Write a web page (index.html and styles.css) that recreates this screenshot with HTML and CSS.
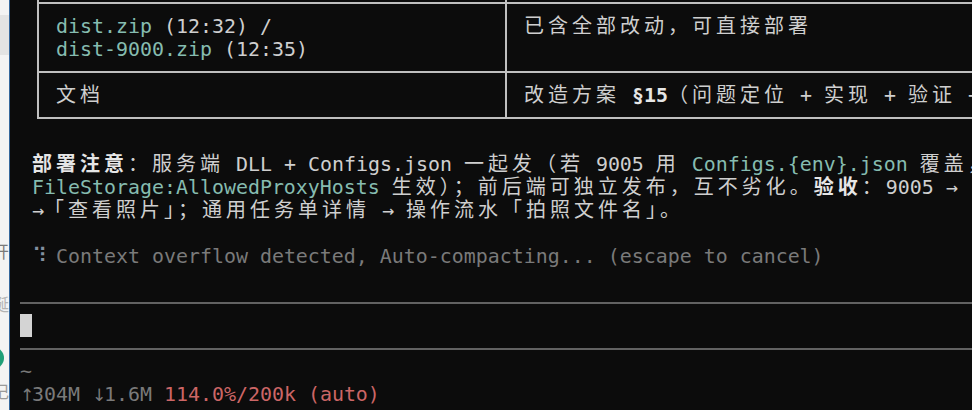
FILE: index.html
```html
<!DOCTYPE html>
<html lang="zh-CN">
<head>
<meta charset="utf-8">
<title>Terminal</title>
<link rel="stylesheet" href="styles.css">
</head>
<body>
<div class="screen">
  <aside class="side">
    <div class="side-top"></div>
    <div class="side-band"></div>
    <div class="side-frag side-frag-a">开</div>
    <div class="side-frag side-frag-b">诞</div>
    <div class="side-dot-row"><span class="side-dot"></span></div>
    <div class="side-frag side-frag-c">记</div>
  </aside>
  <div class="edge"></div>
  <main class="term">
    <div class="tbl">
      <div class="tr tr-stub"><div class="td"></div><div class="td"></div></div>
      <div class="tr">
        <div class="td">
          <div class="ln"><span class="code">dist.zip</span> (12:32) /</div>
          <div class="ln"><span class="code">dist-9000.zip</span> (12:35)</div>
        </div>
        <div class="td">
          <div class="ln"><span class="c">已含全部改动，可直接部署</span></div>
        </div>
      </div>
      <div class="tr">
        <div class="td">
          <div class="ln"><span class="c">文档</span></div>
        </div>
        <div class="td">
          <div class="ln"><span class="c">改造方案</span> <b>§15</b><span class="c">（问题定位</span> + <span class="c">实现</span> + <span class="c">验证</span> + <span class="c">回归）</span></div>
        </div>
      </div>
    </div>
    <div class="para">
      <div class="ln"></div>
      <div class="ln"><b class="c">部署注意</b><span class="c">：服务端</span> DLL + Configs.json <span class="c">一起发（若</span> 9005 <span class="c">用</span> <span class="code">Configs.{env}.json</span> <span class="c">覆盖，</span></div>
      <div class="ln"><span class="code">FileStorage:AllowedProxyHosts</span> <span class="c">生效）；前后端可独立发布，互不劣化。</span><b class="c">验收</b><span class="c">：</span>9005 →</div>
      <div class="ln">→<span class="c">「查看照片」；通用任务单详情</span> → <span class="c">操作流水「拍照文件名」。</span></div>
      <div class="ln"></div>
      <div class="ln dim"><span class="spin">⠹</span> Context overflow detected, Auto-compacting... (escape to cancel)</div>
    </div>
    <div class="ln"></div>
    <div class="sep"></div>
    <div class="ln"><span class="cursor"></span></div>
    <div class="sep"></div>
    <div class="ln dim">~</div>
    <div class="ln"><span class="dim"><span class="arr">↑</span>304M <span class="arr">↓</span>1.6M </span><span class="warn">114.0%/200k (auto)</span></div>
  </main>
</div>
</body>
</html>
```
FILE: styles.css
```css
* { box-sizing: border-box; }
html, body { margin: 0; padding: 0; }
body { background: #0c0c0c; overflow: hidden; }

.screen {
  display: flex;
  width: 972px;
  height: 410px;
  overflow: hidden;
}

/* sliver of the neighbouring window */
.side {
  width: 9px;
  flex: none;
  background: #f3f3f3;
  display: flex;
  flex-direction: column;
  overflow: hidden;
  font-family: "Noto Sans CJK SC", sans-serif;
}
.side-top { height: 15px; flex: none; }
.side-band { height: 40px; flex: none; background: #e3e3e3; }
.side-frag {
  display: flex;
  justify-content: flex-end;
  height: 20px;
  line-height: 20px;
  font-size: 17px;
  white-space: nowrap;
  flex: none;
}
.side-frag-a { margin-top: 186px; color: #7a7a7a; }
.side-frag-b { margin-top: 33px; color: #b3b3b3; }
.side-frag-c { margin-top: 12px; color: #9a9a9a; }
.side-dot-row {
  margin-top: 33px;
  display: flex;
  justify-content: flex-end;
  padding-right: 5px;
  flex: none;
}
.side-dot {
  width: 22px;
  height: 22px;
  flex: none;
  border-radius: 50%;
  background: #1f9f78;
}
.edge { width: 1px; flex: none; background: #35679c; }

/* terminal */
.term {
  flex: 1;
  min-width: 0;
  padding-left: 10px;
  overflow: hidden;
  font-family: "DejaVu Sans Mono", "Noto Sans CJK SC", monospace;
  font-size: 19.93px;
  color: #cfcfcf;
}
.ln {
  height: 23px;
  line-height: 23px;
  white-space: pre;
  overflow: hidden;
}
.c {
  font-family: "Noto Sans CJK SC", sans-serif;
  font-size: 20px;
  letter-spacing: 4px;
  line-height: 18px;
}
b { font-weight: bold; color: #e6e6e6; }
.code { color: #86bcb0; }
.dim { color: #7a7a7a; }
.spin {
  display: inline-block;
  width: 12px;
  color: #8290a0;
  font-family: "DejaVu Sans", sans-serif;
  font-size: 21px;
  line-height: 18px;
}
.arr {
  display: inline-block;
  width: 12px;
  text-align: center;
  font-family: "DejaVu Sans", sans-serif;
  font-size: 17px;
  line-height: 18px;
}
.warn { color: #cc6666; }

/* markdown table */
.tbl {
  margin-top: -8px;
  margin-left: 17px;
  margin-right: -120px;
}
.tr {
  display: grid;
  grid-template-columns: 468px 1fr;
  border-bottom: 2px solid #c0c0c0;
}
.td {
  border-left: 2px solid #c0c0c0;
  padding: 11px 0 10px 17px;
  min-width: 0;
}
.tr-stub .td { height: 10px; padding: 0; }

.para {
  margin-top: 11px;
  margin-left: 12px;
}

.sep {
  height: 23px;
  padding-top: 11px;
}
.sep::before {
  content: "";
  display: block;
  height: 2px;
  background: #626262;
}

.cursor {
  display: inline-block;
  width: 12px;
  height: 23px;
  vertical-align: top;
  background: #d4d4d4;
}
```
